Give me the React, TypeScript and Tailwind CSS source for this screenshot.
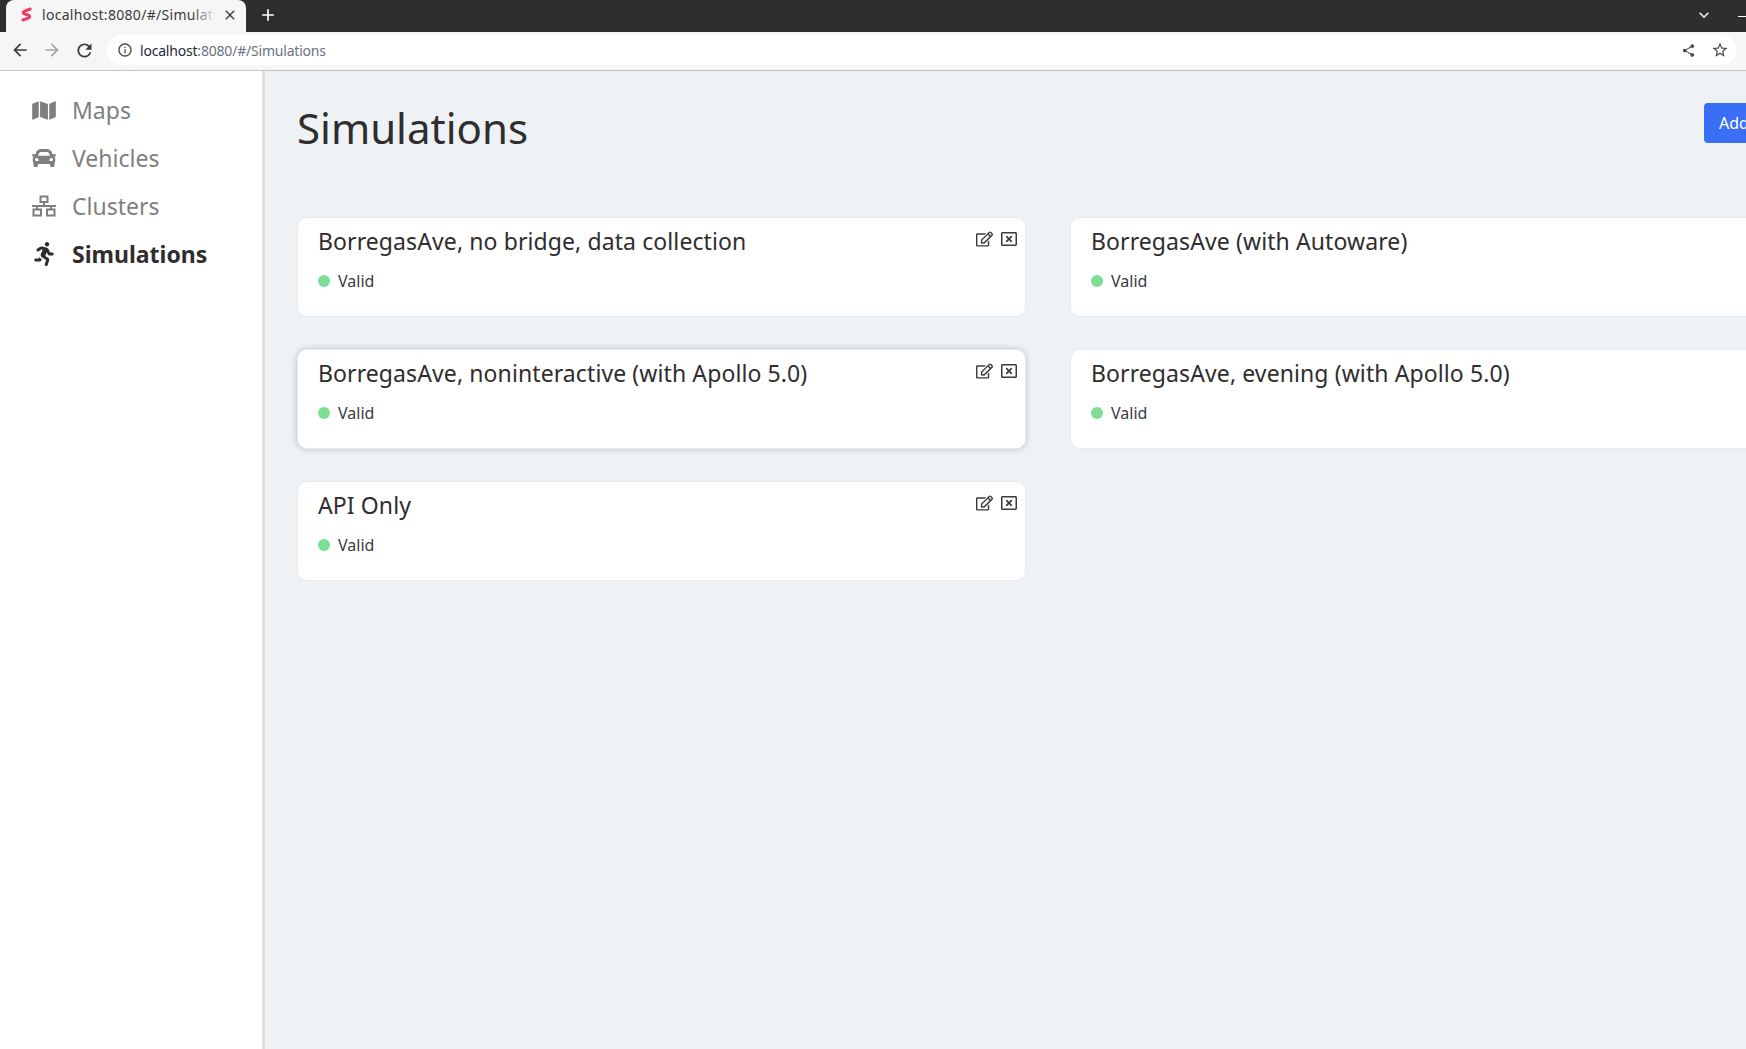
import React from "react";
import { FaCar, FaMap, FaRegEdit, FaRegWindowClose, FaRunning } from "react-icons/fa";
import { MdArrowBack, MdArrowForward, MdClose, MdInfoOutline, MdOutlineKeyboardArrowDown, MdRefresh, MdShare, MdStarBorder, MdAdd } from "react-icons/md";

const uiFont = "font-['Noto_Sans','Open_Sans',sans-serif]";

const ClusterIcon = () => (
  <svg viewBox="0 0 24 24" className="h-[24px] w-[24px]" fill="none" stroke="currentColor" strokeWidth="2">
    <rect x="8.5" y="2.5" width="7" height="5.5" />
    <rect x="1.5" y="15.5" width="7.5" height="6" />
    <rect x="15" y="15.5" width="7.5" height="6" />
    <path d="M12 8v4M0 12h24M5 12v3.5M19 12v3.5" />
  </svg>
);

const Favicon = () => (
  <svg viewBox="0 0 12 16" className="h-[15px] w-[11px]" fill="none" stroke="#ee3a66" strokeWidth="3.2" strokeLinecap="round" strokeLinejoin="round">
    <path d="M10 2 4 4.2C2 5 1.8 6.8 3.6 7.4l4.6 1.4c1.8.6 1.6 2.4-.2 3.2L2 14" />
  </svg>
);

const navItems = [
  { label: "Maps", icon: <FaMap className="h-[21px] w-[24px]" /> },
  { label: "Vehicles", icon: <FaCar className="h-[24px] w-[24px]" /> },
  { label: "Clusters", icon: <ClusterIcon /> },
  { label: "Simulations", icon: <FaRunning className="h-[24px] w-[20px]" />, active: true },
];

const simulations = [
  { name: "BorregasAve, no bridge, data collection" },
  { name: "BorregasAve (with Autoware)" },
  { name: "BorregasAve, noninteractive (with Apollo 5.0)", hover: true },
  { name: "BorregasAve, evening (with Apollo 5.0)" },
  { name: "API Only" },
];

const SimulationCard = ({ name, hover }: { name: string; hover?: boolean }) => (
  <div
    className={`relative h-[100px] rounded-[10px] border border-[#e8ebef] bg-white pl-[20px] pt-[8px] ${
      hover ? "shadow-[0_0_6px_rgba(60,70,110,0.3)]" : ""
    }`}
  >
    <h3 className="text-[23px] leading-[31px] tracking-[0.1px] text-[#2f2d2e]">{name}</h3>
    <div className="mt-[13px] flex items-center gap-[8px] text-[16px] leading-[22px] text-[#3a3a3c]">
      <span className="h-[12px] w-[12px] rounded-full bg-[#7cdf93]" />
      Valid
    </div>
    <div className="absolute right-[8px] top-[13px] flex items-center gap-[8px] text-[#3b3b3b]">
      <FaRegEdit className="h-[16px] w-[17px]" />
      <FaRegWindowClose className="h-[16px] w-[16px]" />
    </div>
  </div>
);

export default function App() {
  return (
    <div className={`flex h-[1049px] w-[1746px] flex-col overflow-hidden bg-white ${uiFont}`}>
      <div className="flex h-[32px] shrink-0 items-end bg-[#2f2d2e] pl-[6px] text-white">
        <div className="flex h-[32px] w-[240px] items-center rounded-t-lg bg-[#f6f6f6] pb-[3px] pl-[15px] pr-[8px] text-[#3a3a3c]">
          <Favicon />
          <div className="relative ml-[10px] w-[174px] overflow-hidden whitespace-nowrap text-[14px] tracking-[0.3px]">
            localhost:8080/#/Simulations
            <span className="absolute inset-y-0 right-0 w-[24px] bg-gradient-to-r from-transparent to-[#f6f6f6]" />
          </div>
          <MdClose className="ml-auto h-[16px] w-[16px]" />
        </div>
        <MdAdd className="ml-[12px] mb-[7px] h-[20px] w-[20px]" />
        <MdOutlineKeyboardArrowDown className="ml-auto mb-[7px] mr-[24px] h-[20px] w-[20px] text-[#e8e8e8]" />
        <span className="mb-[15px] h-[1px] w-[8px] bg-white" />
      </div>

      <div className="flex h-[39px] shrink-0 items-center border-b border-[#c4c4c4] bg-[#f6f6f6] pb-[2px] pl-[10px] pr-[10px]">
        <MdArrowBack className="h-[20px] w-[20px] text-[#3c3c3c]" />
        <MdArrowForward className="ml-[12px] h-[20px] w-[20px] text-[#a6a6a6]" />
        <MdRefresh className="ml-[12px] h-[21px] w-[21px] text-[#3c3c3c]" />
        <div className="ml-[12px] flex h-[30px] flex-1 items-center rounded-full bg-white pl-[10px] pr-[7px]">
          <MdInfoOutline className="h-[16px] w-[16px] text-[#4a4a4a]" />
          <span className="ml-[7px] text-[14px] tracking-[-0.2px] text-[#6b7280]">
            <span className="text-[#1f2937]">localhost</span>:8080/#/Simulations
          </span>
          <MdShare className="ml-auto h-[15px] w-[15px] text-[#4a4a4a]" />
          <MdStarBorder className="ml-[15px] h-[18px] w-[18px] text-[#4a4a4a]" />
        </div>
      </div>

      <div className="flex min-h-0 flex-1">
        <aside className="w-[265px] shrink-0 border-r-[3px] border-[#dddddd] bg-white pl-[32px] pt-[15px]">
          {navItems.map((item) => (
            <div
              key={item.label}
              className={`flex h-[48px] items-center ${item.active ? "font-bold text-[#2f2d2e]" : "text-[#7f7f7f]"}`}
            >
              <span className="flex w-[24px] justify-center">{item.icon}</span>
              <span className="ml-[16px] text-[23px] leading-[32px]">{item.label}</span>
            </div>
          ))}
        </aside>

        <main className="min-w-0 flex-1 bg-[#eff2f5] pl-[32px]">
          <div className="flex items-start justify-between">
            <h1 className="mt-[29px] text-[42px] leading-[56px] text-[#2f2d2e]">Simulations</h1>
            <button className="mt-[32px] h-[40px] w-[42px] overflow-hidden whitespace-nowrap rounded-l-[4px] bg-[#3a6ff5] pl-[15px] text-left text-[16px] text-white">
              Add
            </button>
          </div>
          <div className="mt-[61px] grid w-[1500px] grid-cols-[729px_729px] gap-x-[44px] gap-y-[32px]">
            {simulations.map((sim) => (
              <SimulationCard key={sim.name} name={sim.name} hover={sim.hover} />
            ))}
          </div>
        </main>
      </div>
    </div>
  );
}
